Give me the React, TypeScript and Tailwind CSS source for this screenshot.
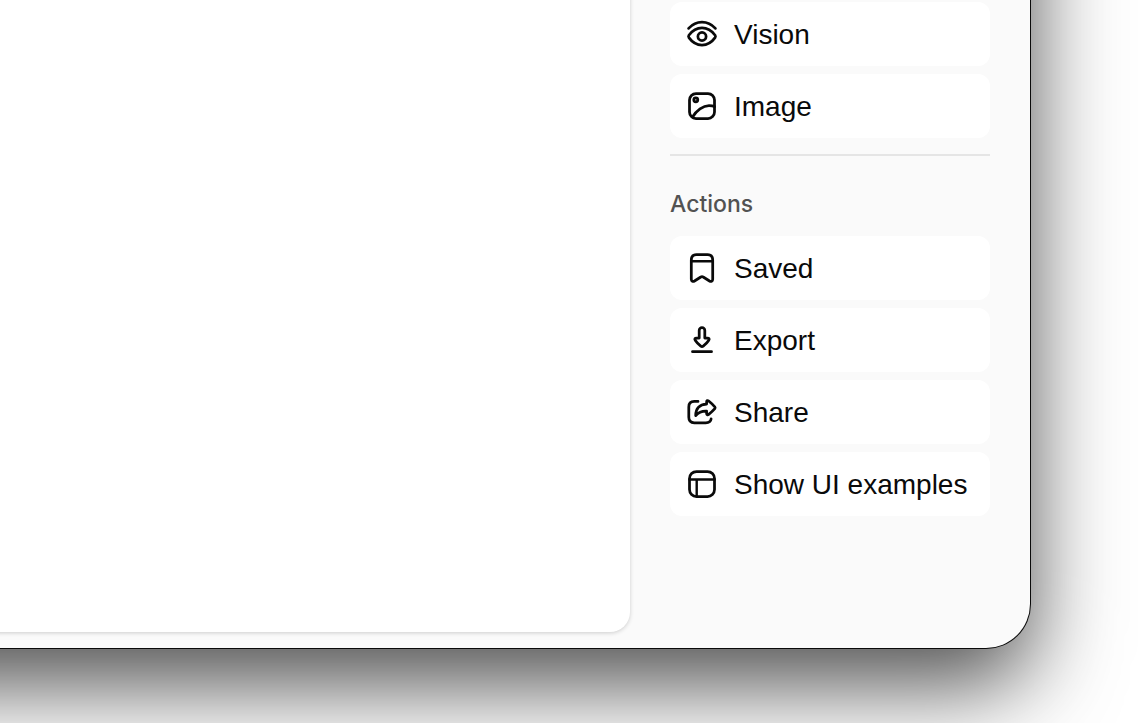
import type { ReactNode } from 'react';

interface SidebarItem {
    label: string;
    icon: ReactNode;
}

function Icon({ children }: { children: ReactNode }) {
    return (
        <svg
            viewBox="0 0 32 32"
            className="h-8 w-8 shrink-0"
            fill="none"
            stroke="currentColor"
            strokeWidth="2.75"
            strokeLinecap="round"
            strokeLinejoin="round"
            aria-hidden="true"
        >
            {children}
        </svg>
    );
}

const tools: SidebarItem[] = [
    {
        label: 'Vision',
        icon: (
            <Icon>
                <path d="M2.6 10.4C6.200 6.500 10.800 4.200 16 4.200s9.800 2.300 13.400 6.200" />
                <path d="M2.900 17.200C6.200 12.800 10.800 9.900 16 9.900s9.800 2.900 13.100 7.300q.8 1.200 0 2.400C25.800 24.200 21.200 27 16 27S6.200 24.200 2.900 19.600q-.8-1.200 0-2.400Z" />
                <circle cx="16" cy="18.500" r="4.100" />
            </Icon>
        ),
    },
    {
        label: 'Image',
        icon: (
            <Icon>
                <rect x="3.500" y="3.500" width="25" height="25" rx="6.500" />
                <circle cx="9.800" cy="9.800" r="2" />
                <path d="M6.500 27C10.500 20.500 17 15.600 23 15.600c2.200 0 4 .3 5.500 1" />
            </Icon>
        ),
    },
];

const actions: SidebarItem[] = [
    {
        label: 'Saved',
        icon: (
            <Icon>
                <path d="M5.300 8.200C5.300 4.500 7.400 2.700 10.500 2.700h11c3.100 0 5.200 1.800 5.200 5.500V27.300c0 1.900-1.700 2.600-3.200 1.700L17.200 25q-1.200-.8-2.400 0l-6.300 4C7 29.900 5.300 29.200 5.300 27.300Z" />
                <path d="M5.500 9.200h21" strokeWidth="2.4" />
            </Icon>
        ),
    },
    {
        label: 'Export',
        icon: (
            <Icon>
                <path d="M13.200 6.400a2.800 2.800 0 0 1 5.600 0v7.600h2.700c1.600 0 2.100 1.200 1.300 2.300-1.400 2.200-3.400 4.200-5.600 5.900q-1.200.9-2.400 0c-2.200-1.700-4.200-3.700-5.600-5.900-.8-1.100-.3-2.300 1.300-2.300h2.700Z" />
                <path d="M6.500 27.700h19" />
            </Icon>
        ),
    },
    {
        label: 'Share',
        icon: (
            <Icon>
                <path d="M12 5.400H8.300Q2.800 5.400 2.800 10.900V21.300q0 5.500 5.500 5.500h11.400q5 0 5.400-3.900" />
                <path d="M20.600 6c0-1.500 1-1.900 2.100-1 2.100 1.700 4.200 3.700 6.100 5.800q.7.900 0 1.800c-1.900 2.200-4 4.100-6.100 5.800-1.100.9-2.100.4-2.100-1v-2.300c-4.700-.2-7.900.9-10.900 4.500C9.600 13 13.200 8.300 20.600 8.100Z" />
            </Icon>
        ),
    },
    {
        label: 'Show UI examples',
        icon: (
            <Icon>
                <rect x="3.500" y="3.500" width="25" height="25" rx="7" />
                <path d="M3.500 11.500h25M10.700 12v16" strokeWidth="2.4" />
            </Icon>
        ),
    },
];

function ItemList({ items }: { items: SidebarItem[] }) {
    return (
        <div className="flex flex-col gap-2">
            {items.map((item) => (
                <button
                    key={item.label}
                    type="button"
                    className="flex h-16 w-full items-center gap-4 rounded-xl bg-white px-4 text-left text-[28px] leading-8 whitespace-nowrap text-[#0a0a0a]"
                >
                    {item.icon}
                    <span className="pt-0.5">{item.label}</span>
                </button>
            ))}
        </div>
    );
}

export default function App() {
    return (
        <div className="flex min-h-screen overflow-hidden bg-white pr-28 pb-[75px] font-['Liberation_Sans',Arial,sans-serif]">
            {/* Window frame, its top and left edges run off screen */}
            <div className="-mt-40 -ml-40 flex flex-1 rounded-br-[44px] bg-[#fafafa] pt-40 pb-4 shadow-[0_0_0_1px_#0a0a0a,0_36px_90px_rgba(0,0,0,0.7)]">
                <main className="-mt-10 flex-1 rounded-br-[20px] bg-white shadow-[0_1px_4px_rgba(0,0,0,0.18)]" />

                {/* Sidebar */}
                <aside className="w-[400px] shrink-0 px-10 pt-0.5">
                    <ItemList items={tools} />
                    <hr className="mt-4 border-t-2 border-[#e5e5e5]" />
                    <h2 className="mt-8 mb-4 font-['Inter',sans-serif] text-[23px] leading-8 font-medium text-[#525252]">
                        Actions
                    </h2>
                    <ItemList items={actions} />
                </aside>
            </div>
        </div>
    );
}
